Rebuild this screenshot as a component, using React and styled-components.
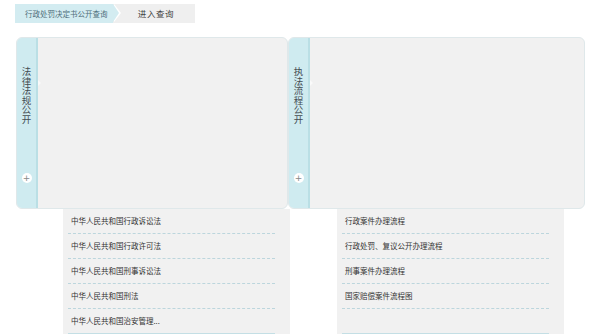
import React from "react";
import styled, { createGlobalStyle } from "styled-components";

const GlobalStyle = createGlobalStyle`
  html, body {
    margin: 0;
    background: #fff;
    font-family: "Noto Sans CJK SC", "Noto Sans", sans-serif;
    overflow: hidden;
  }
`;

const Page = styled.div`
  width: 600px;
  height: 336px;
  padding: 4px 15px 0 16px;
  box-sizing: border-box;
`;

const Crumbs = styled.div`
  display: flex;
  height: 19px;
  margin-left: -1px;
`;

const CrumbActive = styled.div`
  position: relative;
  z-index: 1;
  width: 88px;
  padding-left: 10px;
  background: #d3ecf1;
  color: #4f6f7b;
  font-size: 7.5px;
  line-height: 19px;
  white-space: nowrap;

  &::before,
  &::after {
    content: "";
    position: absolute;
    top: 0;
    border-top: 9.5px solid transparent;
    border-bottom: 9.5px solid transparent;
  }
  &::before {
    right: -8px;
    border-left: 7px solid #fff;
  }
  &::after {
    right: -6px;
    border-left: 6px solid #d3ecf1;
  }
`;

const Crumb = styled.div`
  width: 82px;
  background: #efefef;
  color: #444;
  font-size: 8.5px;
  letter-spacing: 0.6px;
  line-height: 19px;
  text-align: center;
  padding-left: 4px;
  box-sizing: border-box;
`;

const PanelRow = styled.div`
  display: flex;
  margin-top: 14px;
`;

const Panel = styled.div`
  display: flex;
  width: ${(p) => p.$width}px;
  height: 172px;
  box-sizing: border-box;
  border: 1px solid #dfe8ea;
  border-radius: 6px;
  background: #f1f1f1;
  overflow: hidden;
`;

const SideTab = styled.div`
  position: relative;
  display: flex;
  flex-direction: column;
  align-items: center;
  width: 21px;
  flex-shrink: 0;
  padding-top: 29px;
  box-sizing: border-box;
  background: #cfebf0;
  border-right: 2px solid #badfe5;

  &::after {
    content: "";
    position: absolute;
    top: 42px;
    right: -5px;
    border-top: 3px solid transparent;
    border-bottom: 3px solid transparent;
    border-left: 3px solid #fafafa;
  }
`;

const TabLabel = styled.div`
  writing-mode: vertical-rl;
  text-orientation: upright;
  font-size: 9.5px;
  line-height: 10px;
  color: #444d52;
`;

const PlusButton = styled.div`
  margin-top: auto;
  margin-bottom: 25px;
  width: 10px;
  height: 10px;
  border-radius: 50%;
  background: #fff;
  color: #888;
  font-size: 9px;
  line-height: 10px;
  text-align: center;
  font-family: "DejaVu Sans", sans-serif;
`;

const ListRow = styled.div`
  display: flex;
  gap: 47px;
  margin-left: 47px;
`;

const List = styled.ul`
  list-style: none;
  margin: 0;
  width: 227px;
  padding: 0 15px 0 5px;
  box-sizing: border-box;
  background: #f1f1f1;
`;

const Item = styled.li`
  height: 24px;
  padding-left: 3px;
  border-bottom: 1px dashed #bcd6dd;
  color: #333;
  font-size: 7.5px;
  line-height: 24px;
  white-space: nowrap;

  &:last-child {
    border-bottom: 1px solid #c4dfe5;
  }
`;

const laws = [
  "中华人民共和国行政诉讼法",
  "中华人民共和国行政许可法",
  "中华人民共和国刑事诉讼法",
  "中华人民共和国刑法",
  "中华人民共和国治安管理...",
];

const flows = [
  "行政案件办理流程",
  "行政处罚、复议公开办理流程",
  "刑事案件办理流程",
  "国家赔偿案件流程图",
  "",
];

export default function App() {
  return (
    <Page>
      <GlobalStyle />
      <Crumbs>
        <CrumbActive>行政处罚决定书公开查询</CrumbActive>
        <Crumb>进入查询</Crumb>
      </Crumbs>
      <PanelRow>
        <Panel $width={272}>
          <SideTab>
            <TabLabel>法律法规公开</TabLabel>
            <PlusButton>+</PlusButton>
          </SideTab>
        </Panel>
        <Panel $width={297}>
          <SideTab>
            <TabLabel>执法流程公开</TabLabel>
            <PlusButton>+</PlusButton>
          </SideTab>
        </Panel>
      </PanelRow>
      <ListRow>
        <List>
          {laws.map((t) => (
            <Item key={t}>{t}</Item>
          ))}
        </List>
        <List>
          {flows.map((t, i) => (
            <Item key={i}>{t}</Item>
          ))}
        </List>
      </ListRow>
    </Page>
  );
}
